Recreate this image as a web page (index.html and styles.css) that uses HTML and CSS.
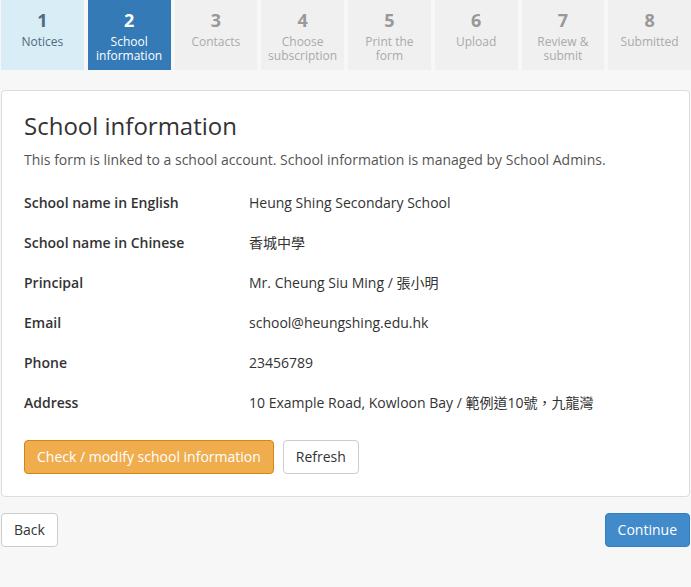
FILE: index.html
```html
<!DOCTYPE html>
<html lang="en">
<head>
    <meta charset="UTF-8">
    <meta name="viewport" content="width=device-width, initial-scale=1.0">
    <title>Subscription - School information</title>
    <link rel="stylesheet" href="styles.css">
</head>
<body>

    <div class="steps">
        <div class="step done"><div class="num">1</div><div class="name">Notices</div></div>
        <div class="step current"><div class="num">2</div><div class="name">School information</div></div>
        <div class="step"><div class="num">3</div><div class="name">Contacts</div></div>
        <div class="step"><div class="num">4</div><div class="name">Choose subscription</div></div>
        <div class="step"><div class="num">5</div><div class="name">Print the form</div></div>
        <div class="step"><div class="num">6</div><div class="name">Upload</div></div>
        <div class="step"><div class="num">7</div><div class="name">Review &amp; submit</div></div>
        <div class="step"><div class="num">8</div><div class="name">Submitted</div></div>
    </div>

    <div class="panel">
        <h2>School information</h2>
        <p class="intro">This form is linked to a school account. School information is managed by School Admins.</p>

        <div class="info">
            <div class="label">School name in English</div>
            <div class="value">Heung Shing Secondary School</div>
            <div class="label">School name in Chinese</div>
            <div class="value">香城中學</div>
            <div class="label">Principal</div>
            <div class="value">Mr. Cheung Siu Ming / 張小明</div>
            <div class="label">Email</div>
            <div class="value">school@heungshing.edu.hk</div>
            <div class="label">Phone</div>
            <div class="value">23456789</div>
            <div class="label">Address</div>
            <div class="value">10 Example Road, Kowloon Bay / 範例道10號，九龍灣</div>
        </div>

        <div class="actions">
            <button class="btn btn-warning">Check / modify school information</button>
            <button class="btn">Refresh</button>
        </div>
    </div>

    <div class="footer">
        <button class="btn">Back</button>
        <button class="btn btn-primary">Continue</button>
    </div>

</body>
</html>
```

FILE: styles.css
```css
body {
    font-family: "Open Sans", "Noto Sans CJK TC", sans-serif;
    font-size: 14px;
    color: #333;
    background-color: #f7f7f7;
    margin: 0;
    padding: 0;
}

.steps {
    display: flex;
    gap: 4px;
    padding-left: 1px;
}

.step {
    flex: 1;
    height: 70px;
    box-sizing: border-box;
    padding: 9px 4px 0;
    text-align: center;
    background-color: #f0f0f0;
    color: #aaa;
}

.step .num {
    font-size: 18px;
    font-weight: bold;
    line-height: 22px;
    color: #999;
}

.step .name {
    font-size: 12px;
    line-height: 14px;
    margin-top: 4px;
}

.step.done {
    background-color: #d9edf7;
    color: #4f6b7d;
}

.step.done .num {
    color: #4f6b7d;
}

.step.current {
    background-color: #337ab7;
    color: #fff;
}

.step.current .num {
    color: #fff;
}

.panel {
    margin: 20px 1px 0;
    padding: 22px 22px 22px;
    background-color: #fff;
    border: 1px solid #ddd;
    border-radius: 4px;
}

.panel h2 {
    margin: 0;
    font-size: 24px;
    font-weight: normal;
    line-height: 26px;
    color: #333;
}

.intro {
    margin: 11px 0 0;
    line-height: 20px;
    color: #555;
}

.info {
    display: grid;
    grid-template-columns: 225px 1fr;
    margin-top: 13px;
}

.info .label,
.info .value {
    padding: 10px 0;
    line-height: 20px;
}

.info .label {
    font-weight: 600;
}

.actions {
    display: flex;
    gap: 9px;
    margin-top: 17px;
}

.btn {
    font-family: inherit;
    font-size: 14px;
    line-height: 20px;
    padding: 6px 12px;
    color: #333;
    background-color: #fff;
    border: 1px solid #ccc;
    border-radius: 4px;
}

.btn-warning {
    color: #fff;
    background-color: #f0ad4e;
    border-color: #d58512;
}

.btn-primary {
    color: #fff;
    background-color: #428bca;
    border-color: #357ebd;
}

.footer {
    display: flex;
    justify-content: space-between;
    margin: 16px 1px 0;
}
```
